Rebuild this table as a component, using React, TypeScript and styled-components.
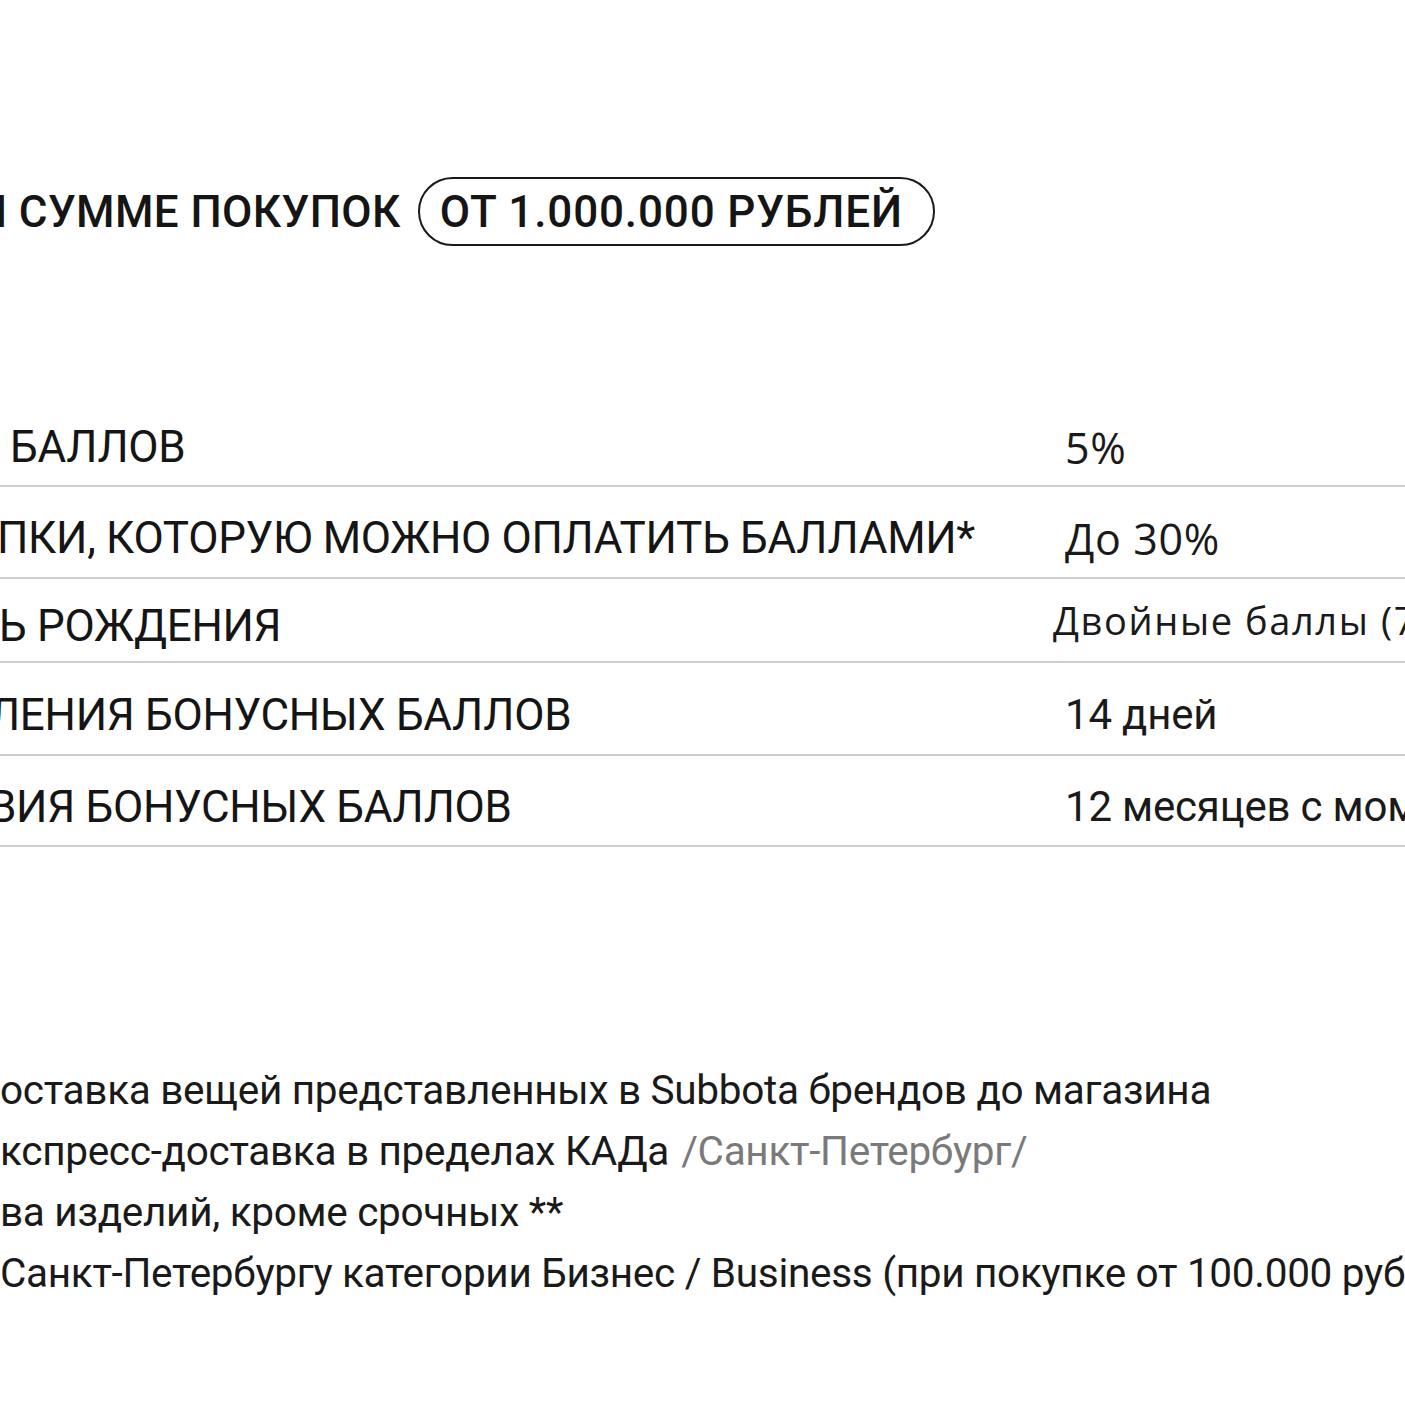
import React from "react";
import styled, { createGlobalStyle } from "styled-components";

const GlobalStyle = createGlobalStyle`
  html, body {
    margin: 0;
    padding: 0;
    background: #ffffff;
    overflow: hidden;
  }
  body {
    font-family: Roboto, "Liberation Sans", sans-serif;
    color: #151515;
  }
`;

const Page = styled.div`
  width: 1405px;
  height: 1405px;
  overflow: hidden;
  padding-top: 177px;
  box-sizing: border-box;
`;

const HeadingRow = styled.div`
  display: flex;
  align-items: center;
  gap: 17px;
  height: 69px;
  white-space: nowrap;
`;

const HeadingText = styled.h2<{ $cut: number }>`
  margin: 0 0 0 ${(p) => p.$cut}px;
  font-family: Roboto, "Liberation Sans", sans-serif;
  font-weight: 500;
  font-size: 44px;
  letter-spacing: 0.4px;
  line-height: 1;
  text-transform: uppercase;
`;

const Pill = styled.span`
  display: inline-flex;
  align-items: center;
  box-sizing: border-box;
  height: 69px;
  width: 517px;
  padding: 0 0 0 20px;
  border: 2px solid #1a1a1a;
  border-radius: 999px;
  font-family: Roboto, "Liberation Sans", sans-serif;
  font-weight: 500;
  font-size: 44px;
  letter-spacing: 0.85px;
  line-height: 1;
`;

const Table = styled.div`
  margin-top: 151px;
  display: flex;
  flex-direction: column;
`;

const Row = styled.div<{ $height: number }>`
  display: grid;
  grid-template-columns: 1065px 1fr;
  align-items: center;
  box-sizing: border-box;
  height: ${(p) => p.$height}px;
  padding-top: 12px;
  border-bottom: 2px solid #cdcdcd;
  white-space: nowrap;
`;

const Label = styled.div<{ $cut: number }>`
  margin-left: ${(p) => p.$cut}px;
  font-family: Roboto, "Liberation Sans", sans-serif;
  font-weight: 400;
  font-size: 44px;
  letter-spacing: -0.3px;
  line-height: 1;
  text-transform: uppercase;
`;

const Value = styled.div<{ $kind: "geo" | "geoSmall" | "grotesk" }>`
  line-height: 1;
  color: #1a1a1a;
  font-family: ${(p) =>
    p.$kind === "grotesk"
      ? 'Roboto, "Liberation Sans", sans-serif'
      : '"Open Sans", "DejaVu Sans", sans-serif'};
  font-size: ${(p) => (p.$kind === "geo" ? 43 : p.$kind === "geoSmall" ? 38 : 42)}px;
  font-weight: 400;
  letter-spacing: ${(p) => (p.$kind === "geoSmall" ? 1.6 : p.$kind === "geo" ? 0.6 : -0.2)}px;
  margin-left: ${(p) => (p.$kind === "geoSmall" ? -12 : 0)}px;
  margin-top: ${(p) => (p.$kind === "geoSmall" ? -12 : 0)}px;
`;

const Notes = styled.div`
  margin-top: 212px;
  display: flex;
  flex-direction: column;
`;

const Note = styled.p`
  margin: 0;
  height: 61px;
  display: flex;
  align-items: center;
  font-family: Roboto, "Liberation Sans", sans-serif;
  font-size: 40.5px;
  letter-spacing: -0.3px;
  white-space: nowrap;
  color: #1a1a1a;
`;

const Muted = styled.span`
  color: #7a7a7a;
  margin-left: 0.3em;
`;

type RowData = {
  label: string;
  cut: number;
  value: string;
  kind: "geo" | "geoSmall" | "grotesk";
  height: number;
};

const rows: RowData[] = [
  { label: "Баллов", cut: 10, value: "5%", kind: "geo", height: 90 },
  { label: "пки, которую можно оплатить баллами*", cut: -3, value: "До 30%", kind: "geo", height: 92 },
  { label: "ь рождения", cut: -1, value: "Двойные баллы (7 дней)", kind: "geoSmall", height: 84 },
  { label: "ления бонусных баллов", cut: -11, value: "14 дней", kind: "grotesk", height: 93 },
  { label: "вия бонусных баллов", cut: -11, value: "12 месяцев с момента начисления", kind: "grotesk", height: 91 },
];

export default function App() {
  return (
    <>
      <GlobalStyle />
      <Page>
        <HeadingRow>
          <HeadingText $cut={-24}>и сумме покупок</HeadingText>
          <Pill>ОТ 1.000.000 РУБЛЕЙ</Pill>
        </HeadingRow>

        <Table>
          {rows.map((r) => (
            <Row key={r.label} $height={r.height}>
              <Label $cut={r.cut}>{r.label}</Label>
              <Value $kind={r.kind}>{r.value}</Value>
            </Row>
          ))}
        </Table>

        <Notes>
          <Note>оставка вещей представленных в Subbota брендов до магазина</Note>
          <Note>
            кспресс-доставка в пределах КАДа<Muted>/Санкт-Петербург/</Muted>
          </Note>
          <Note>ва изделий, кроме срочных **</Note>
          <Note>Санкт-Петербургу категории Бизнес / Business (при покупке от 100.000 рублей)</Note>
        </Notes>
      </Page>
    </>
  );
}
